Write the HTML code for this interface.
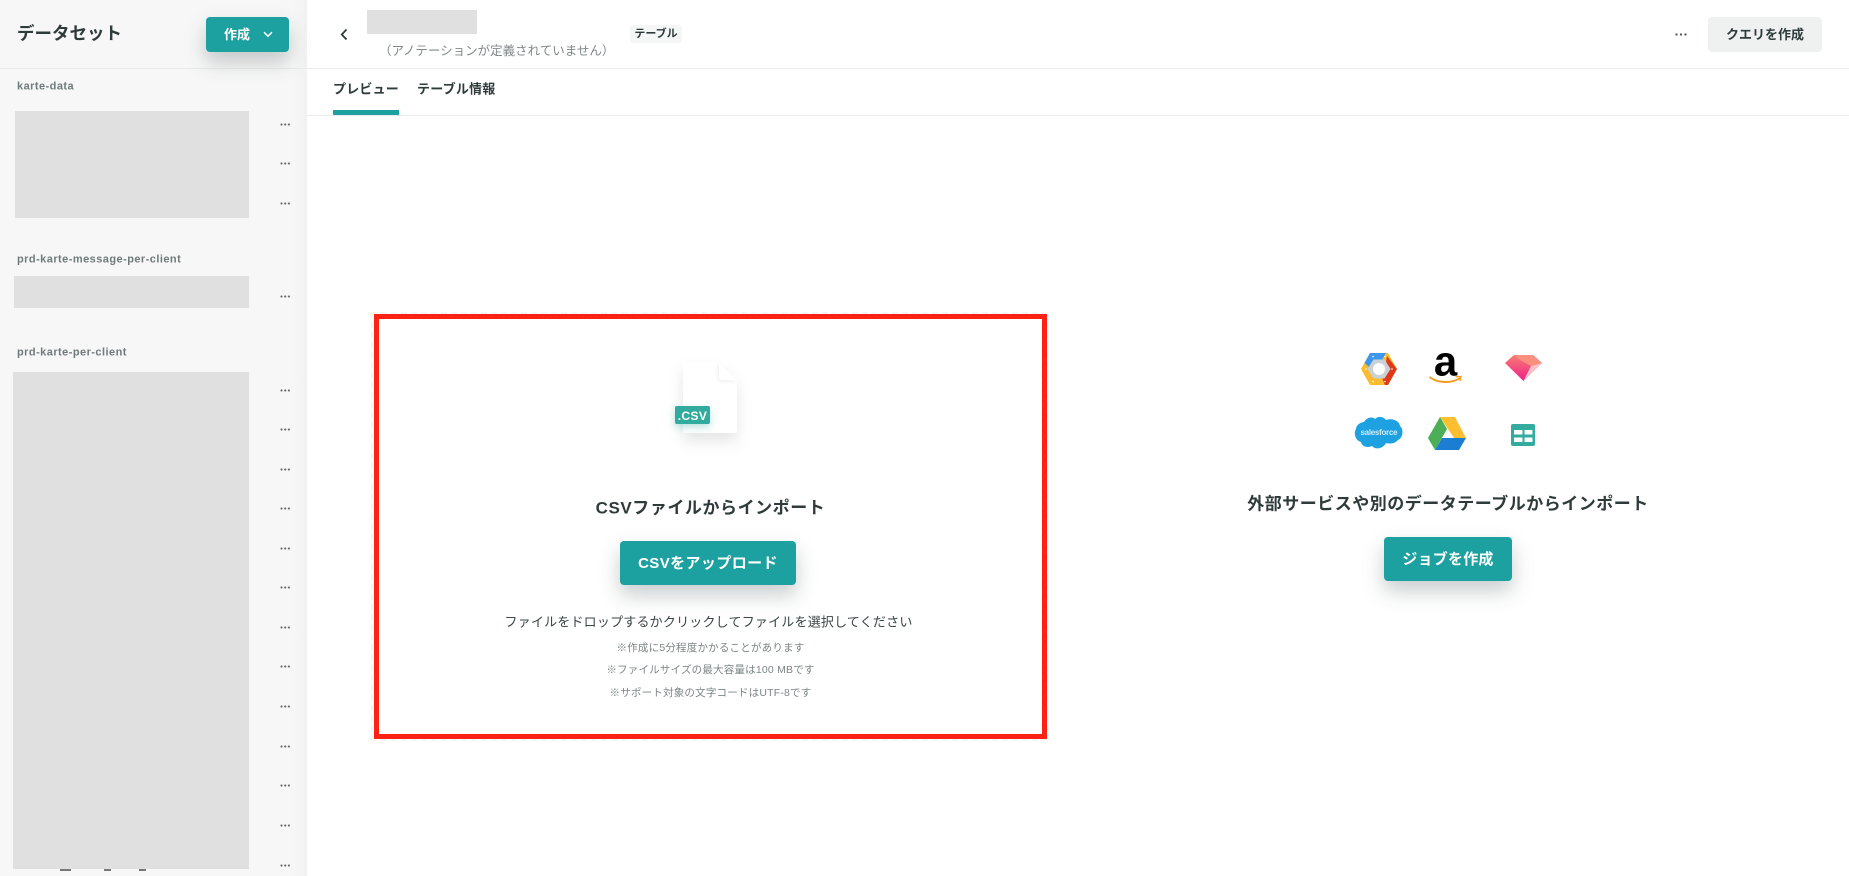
<!DOCTYPE html>
<html lang="ja"><head><meta charset="utf-8"><style>
html,body{margin:0;padding:0;width:1849px;height:876px;overflow:hidden;background:#fff}
body{font-family:"Liberation Sans","Noto Sans CJK JP",sans-serif;color:#2f3b3b;position:relative}
.a{position:absolute;white-space:nowrap}
.g{position:absolute;background:#e0e0e0}
.t{line-height:1;transform:translateY(-50%)}
.c{left:0;text-align:center;line-height:1;transform:translateY(-50%)}
.btn{position:absolute;background:#1ca1a0;border-radius:4px;color:#fff;font-weight:700;display:flex;align-items:center;justify-content:center;box-shadow:0 10px 20px rgba(40,60,60,.25)}
.d{position:absolute;left:280px;width:11px;height:3px;background:radial-gradient(circle at 1.5px 1.5px,#666 .9px,transparent 1.2px) 0 0/3.7px 3px}
.n{font-size:11px;font-weight:700;color:#6f7a7a;letter-spacing:.45px}
.s{font-size:10.5px;letter-spacing:.2px;color:#7c8585}
</style></head><body>
<div class="a" style="left:0;top:0;width:307px;height:876px;background:linear-gradient(90deg,#f7f7f7 0,#f7f7f7 293px,#f2f2f2 306px);"></div>
<div class="a" style="left:0;top:68px;width:1849px;height:1px;background:#e9ebeb"></div>
<div class="a" style="left:307px;top:115px;width:1542px;height:1px;background:#e9ebeb"></div>
<div class="a t" style="left:17px;top:34px;font-size:17.5px;font-weight:700">データセット</div>
<div class="btn" style="left:206px;top:17px;width:83px;height:35px;font-size:13px;justify-content:flex-start"><span style="margin-left:18px;margin-top:-2px">作成</span><svg style="margin-left:13px;margin-top:-1px" width="10" height="7" viewBox="0 0 10 7"><path d="M1 1.2L5 5.2L9 1.2" fill="none" stroke="#fff" stroke-width="1.5"/></svg></div>

<div class="a n t" style="left:17px;top:87px">karte-data</div>
<div class="g" style="left:15px;top:111px;width:234px;height:107px"></div>
<div class="d" style="top:123px"></div><div class="d" style="top:162px"></div><div class="d" style="top:202px"></div>
<div class="a n t" style="left:17px;top:260px">prd-karte-message-per-client</div>
<div class="g" style="left:14px;top:276px;width:235px;height:32px"></div>
<div class="d" style="top:295px"></div>
<div class="a n t" style="left:17px;top:353px">prd-karte-per-client</div>
<div class="g" style="left:13px;top:372px;width:236px;height:497px"></div>
<div class="d" style="top:389px"></div><div class="d" style="top:428px"></div><div class="d" style="top:468px"></div><div class="d" style="top:507px"></div><div class="d" style="top:547px"></div><div class="d" style="top:586px"></div><div class="d" style="top:626px"></div><div class="d" style="top:665px"></div><div class="d" style="top:705px"></div><div class="d" style="top:745px"></div><div class="d" style="top:784px"></div><div class="d" style="top:824px"></div><div class="d" style="top:864px"></div>
<div class="a" style="left:60px;top:869px;width:11px;height:2px;background:#777"></div>
<div class="a" style="left:104px;top:869px;width:7px;height:2px;background:#777"></div>
<div class="a" style="left:139px;top:869px;width:7px;height:2px;background:#777"></div>

<svg class="a" style="left:339px;top:28px" width="10" height="13" viewBox="0 0 10 13"><path d="M7.5 1.5L2.8 6.5L7.5 11.5" fill="none" stroke="#2f3b3b" stroke-width="1.8"/></svg>
<div class="g" style="left:367px;top:10px;width:110px;height:24px"></div>
<div class="a t" style="left:379px;top:51px;font-size:12.5px;color:#808888">（アノテーションが定義されていません）</div>
<div class="a" style="left:630px;top:25px;width:52px;height:18px;background:#f5f6f6;border-radius:3px;font-size:11px;font-weight:700;line-height:18px;text-align:center">テーブル</div>
<div class="a t" style="left:333px;top:89px;font-size:13px;font-weight:700;letter-spacing:.2px">プレビュー</div>
<div class="a t" style="left:417px;top:89px;font-size:13px;font-weight:700;letter-spacing:.2px">テーブル情報</div>
<div class="a" style="left:333px;top:110px;width:66px;height:5px;background:#1ca1a0"></div>
<div class="a" style="left:1675px;top:33px;width:12px;height:3px;background:radial-gradient(circle at 1.5px 1.5px,#555 1px,transparent 1.3px) 0 0/4.5px 3px"></div>
<div class="a" style="left:1708px;top:17px;width:114px;height:35px;background:#eff1f1;border-radius:4px;font-size:13px;font-weight:700;line-height:35px;text-align:center">クエリを作成</div>

<!-- red box -->
<div class="a" style="left:371px;top:312px;width:677px;height:429px;box-sizing:border-box;border:2px dashed #f5f5f5"></div>
<div class="a" style="left:374px;top:314px;width:673px;height:425px;box-sizing:border-box;border:5px solid #fe2215"></div>

<!-- file icon -->
<svg class="a" style="left:660px;top:350px;overflow:visible" width="100" height="100" viewBox="0 0 100 100">
<defs>
<filter id="fs" x="-60%" y="-40%" width="220%" height="190%"><feDropShadow dx="0" dy="8" stdDeviation="7" flood-color="#000" flood-opacity=".1"/></filter>
<filter id="fo" x="-60%" y="-60%" width="220%" height="220%"><feDropShadow dx="-1" dy="1" stdDeviation="1.5" flood-color="#000" flood-opacity=".08"/></filter>
<filter id="ft" x="-40%" y="-60%" width="180%" height="260%"><feDropShadow dx="0" dy="3" stdDeviation="4" flood-color="#33ab9f" flood-opacity=".35"/></filter>
</defs>
<path d="M25 12.500H59L77 30.500V81a2 2 0 0 1-2 2H25a1.500 1.500 0 0 1-2-2V14.500a2 2 0 0 1 2-2Z" fill="#fff" filter="url(#fs)"/>
<path d="M59 12.500L77 30.500H63a4 4 0 0 1-4-4Z" fill="#fff" filter="url(#fo)"/>
<rect x="15" y="56" width="35" height="18" rx="2" fill="#33ab9f" filter="url(#ft)"/>
<text x="32.500" y="70" font-family="Liberation Sans,sans-serif" font-size="12" font-weight="700" fill="#fff" text-anchor="middle" letter-spacing=".4">.CSV</text>
</svg>

<div class="a c" style="left:375px;width:671px;top:508px;font-size:17px;font-weight:700;letter-spacing:.55px">CSVファイルからインポート</div>
<div class="btn" style="left:620px;top:541px;width:176px;height:44px;font-size:15px;letter-spacing:.4px"><span style="margin-top:-2px">CSVをアップロード</span></div>
<div class="a c" style="left:375px;width:667px;top:622px;font-size:13px;letter-spacing:.2px;color:#3a4545">ファイルをドロップするかクリックしてファイルを選択してください</div>
<div class="a c s" style="left:375px;width:671px;top:648px">※作成に5分程度かかることがあります</div>
<div class="a c s" style="left:375px;width:671px;top:670px">※ファイルサイズの最大容量は100 MBです</div>
<div class="a c s" style="left:375px;width:671px;top:693px">※サポート対象の文字コードはUTF-8です</div>

<!-- right icons -->
<svg class="a" style="left:1361px;top:353px" width="36" height="32" viewBox="0 0 36 32">
<path d="M0 16L9 0H27L36 16L27 32H9Z" fill="#fbbd2f"/>
<path d="M9 0H25L21 7H13L8 14L3.500 10Z" fill="#3f97ec"/>
<path d="M26 3L36 16L27 32H24L21 25L29 16L25 9Z" fill="#de3a1a"/>
<path d="M12.500 6.500H23.500L29.500 16L23.500 25.500H12.500L6.500 16Z" fill="#c9d0d6"/>
<circle cx="18" cy="16" r="6" fill="#fff"/>
<circle cx="12" cy="3.500" r=".8" fill="#fff"/><circle cx="24" cy="3.500" r=".8" fill="#fff"/><circle cx="31" cy="16" r=".8" fill="#fff"/><circle cx="24" cy="28.500" r=".8" fill="#fff"/><circle cx="12" cy="28.500" r=".8" fill="#fff"/><circle cx="5" cy="16" r=".8" fill="#fff"/>
</svg>
<svg class="a" style="left:1428px;top:351px" width="35" height="33" viewBox="0 0 35 33">
<text x="17.500" y="24.500" font-family="Liberation Sans,sans-serif" font-size="42" font-weight="700" text-anchor="middle" fill="#000">a</text>
<path d="M1.500 26C10 32.500 24 32.500 32 27" fill="none" stroke="#f39a1f" stroke-width="1.900"/>
<path d="M27.500 25.800L33 25.500L32 30" fill="none" stroke="#f39a1f" stroke-width="1.300"/>
</svg>
<svg class="a" style="left:1505px;top:355px" width="37" height="27" viewBox="0 0 37 27">
<defs><linearGradient id="gm" x1="0" y1="0" x2="0" y2="1"><stop offset="0" stop-color="#f97c72"/><stop offset="1" stop-color="#ee1f8a"/></linearGradient></defs>
<path d="M9 0H28L37 8L18.500 26L0 8Z" fill="url(#gm)"/>
<path d="M26 11L37 8L18.500 26Z" fill="#fcc2c8"/>
<path d="M9 0H28L37 8L26 11L13 4Z" fill="#fa8f7d"/>
</svg>
<svg class="a" style="left:1354px;top:416px" width="49" height="34" viewBox="0 0 49 34">
<path d="M10 6C12 2 18 0 21 3C24 0 29 0 32 4C37 2 45 4 46 10C50 13 49 22 44 24C41 28 35 28 32 27C29 33 21 34 18 30C14 32 8 31 7 26C2 25 -1 18 2 13C2 9 7 6 10 6Z" fill="#1ea1e1"/>
<text x="25" y="19" font-family="Liberation Sans,sans-serif" font-size="8" font-weight="700" text-anchor="middle" fill="#cfeafa" textLength="37">salesforce</text>
</svg>
<svg class="a" style="left:1428px;top:417px" width="38" height="34" viewBox="0 0 38 34">
<path d="M12 0H27L38 21H26Z" fill="#fdbf30"/>
<path d="M12 0L19 12L7 33L0 21Z" fill="#4cae57"/>
<path d="M14 21H38L31 33H7Z" fill="#1c7ed2"/>
</svg>
<svg class="a" style="left:1511px;top:424px" width="24" height="22" viewBox="0 0 24 22">
<rect width="24" height="22" rx="2" fill="#33ab9f"/>
<rect x="3" y="6" width="8.500" height="4.500" rx=".5" fill="#fff"/><rect x="13.500" y="6" width="8" height="4.500" rx=".5" fill="#fff"/>
<rect x="3" y="13.500" width="8.500" height="4.500" rx=".5" fill="#fff"/><rect x="13.500" y="13.500" width="8" height="4.500" rx=".5" fill="#fff"/>
</svg>

<div class="a c" style="left:1148px;width:600px;top:504px;font-size:17px;font-weight:700;letter-spacing:.5px">外部サービスや別のデータテーブルからインポート</div>
<div class="btn" style="left:1384px;top:537px;width:128px;height:44px;font-size:15px;letter-spacing:.2px"><span style="margin-top:-1px">ジョブを作成</span></div>
</body></html>
